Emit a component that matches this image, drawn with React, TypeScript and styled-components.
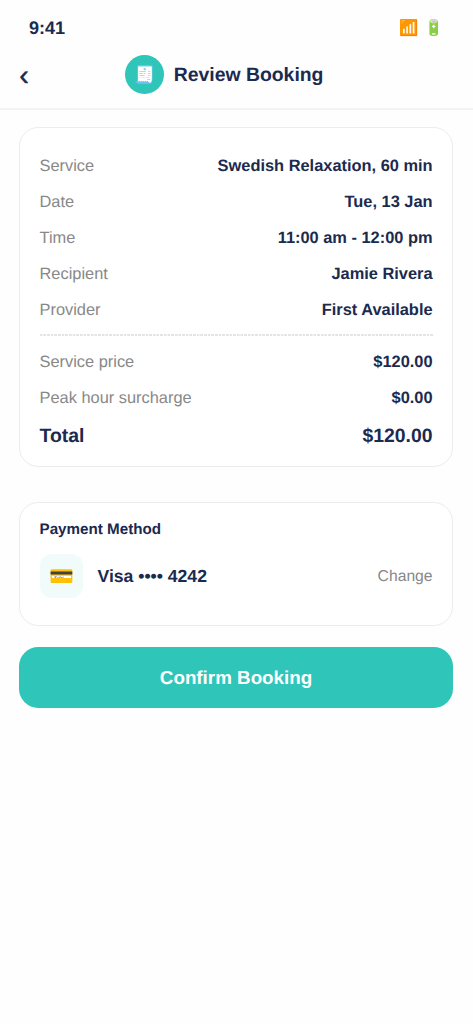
import React from "react";
import styled, { createGlobalStyle } from "styled-components";

const navy = "#1b2a4e";
const teal = "#2fc5b8";
const grey = "#888888";
const line = "#ececec";

const GlobalStyle = createGlobalStyle`
  * { box-sizing: border-box; }
  body {
    margin: 0;
    background: #fefefe;
    color: ${navy};
    font-family: "Liberation Sans", Arial, "Noto Color Emoji", sans-serif;
    text-rendering: geometricPrecision;
  }
`;

const Screen = styled.div`
  display: flex;
  flex-direction: column;
  width: 100%;
  min-height: 1024px;
`;

const StatusBar = styled.div`
  display: flex;
  align-items: center;
  justify-content: space-between;
  height: 55px;
  padding: 1px 28.9px 0;
  font-size: 18.1px;
  font-weight: 700;
`;

const StatusIcons = styled.div`
  display: flex;
  gap: 6.4px;
  font-size: 15.6px;
  font-weight: 400;
`;

const Header = styled.header`
  display: grid;
  grid-template-columns: 10px 1fr 34.4px;
  grid-template-rows: 39px;
  align-items: center;
  height: 54.8px;
  padding: 0 19.26px;
  border-bottom: 2px solid #f3f3f3;
`;

const BackButton = styled.button`
  padding: 2px 0 0;
  border: 0;
  background: none;
  color: ${navy};
  font: 400 28.9px/37px "Liberation Sans", Arial, sans-serif;
  -webkit-text-stroke: 0.4px ${navy};
  text-align: left;
`;

const HeaderTitle = styled.h1`
  display: flex;
  align-items: center;
  justify-content: center;
  gap: 9.6px;
  margin: 0;
  font-size: 19.4px;
  font-weight: 700;
  white-space: nowrap;
`;

const TitleText = styled.span`
  padding-top: 2px;
`;

const HeaderBadge = styled.span`
  display: flex;
  align-items: center;
  justify-content: center;
  width: 39px;
  height: 39px;
  padding-top: 1px;
  border-radius: 50%;
  background: ${teal};
  font-size: 16.85px;
  font-weight: 400;
`;

const Content = styled.main`
  display: flex;
  flex-direction: column;
  padding: 16.8px 20.2px 0 19.26px;
`;

const Card = styled.section<{ $height: number; $gap: number }>`
  height: ${(p) => p.$height}px;
  margin-bottom: ${(p) => p.$gap}px;
  padding: 19.26px;
  border: 1.2px solid ${line};
  border-radius: 19.26px;
  background: #fff;
`;

const Row = styled.div`
  display: flex;
  align-items: center;
  justify-content: space-between;
  height: 36px;
  padding-top: 2.6px;
  font-size: 16.4px;
`;

const Label = styled.span`
  color: ${grey};
`;

const Value = styled.span`
  font-weight: 700;
`;

const Divider = styled.hr`
  height: 2px;
  margin: 7px 0;
  border: 0;
  background: repeating-linear-gradient(
    90deg,
    #e4e4e4 0 2.2px,
    #fff 2.7px 3.2px,
    #e4e4e4 3.65px
  );
`;

const TotalRow = styled.div`
  display: flex;
  justify-content: space-between;
  padding-top: 10.4px;
  font-size: 19.4px;
  line-height: 22px;
  font-weight: 700;
`;

const CardTitle = styled.h2`
  margin: -2px 0 14.2px;
  font-size: 15.2px;
  line-height: 20px;
  font-weight: 700;
`;

const PaymentRow = styled.div`
  display: flex;
  align-items: center;
  gap: 14.4px;
`;

const PaymentIcon = styled.span`
  display: flex;
  align-items: center;
  justify-content: center;
  width: 43.6px;
  height: 43.6px;
  padding: 2px 0 0 1px;
  border-radius: 12px;
  background: #f0fbfa;
  font-size: 20px;
`;

const CardNumber = styled.span`
  flex: 1;
  padding-top: 2px;
  font-size: 17.6px;
  font-weight: 700;
`;

const ChangeLink = styled.a`
  padding-top: 2px;
  color: ${grey};
  font-size: 15.7px;
`;

const ConfirmButton = styled.button`
  height: 60.5px;
  border: 0;
  border-radius: 19.26px;
  background: ${teal};
  color: #fff;
  font: 700 18.8px "Liberation Sans", Arial, sans-serif;
  text-rendering: geometricPrecision;
`;

const details = [
  ["Service", "Swedish Relaxation, 60 min"],
  ["Date", "Tue, 13 Jan"],
  ["Time", "11:00 am - 12:00 pm"],
  ["Recipient", "Jamie Rivera"],
  ["Provider", "First Available"],
];

const prices = [
  ["Service price", "$120.00"],
  ["Peak hour surcharge", "$0.00"],
];

const Rows = ({ items }: { items: string[][] }) => (
  <>
    {items.map(([label, value]) => (
      <Row key={label}>
        <Label>{label}</Label>
        <Value>{value}</Value>
      </Row>
    ))}
  </>
);

export default function App() {
  return (
    <Screen>
      <GlobalStyle />
      <StatusBar>
        <span>9:41</span>
        <StatusIcons>
          <span>📶</span>
          <span>🔋</span>
        </StatusIcons>
      </StatusBar>
      <Header>
        <BackButton aria-label="Back">‹</BackButton>
        <HeaderTitle>
          <HeaderBadge>🧾</HeaderBadge>
          <TitleText>Review Booking</TitleText>
        </HeaderTitle>
      </Header>
      <Content>
        <Card $height={340.8} $gap={34.2}>
          <Rows items={details} />
          <Divider />
          <Rows items={prices} />
          <TotalRow>
            <span>Total</span>
            <span>$120.00</span>
          </TotalRow>
        </Card>
        <Card $height={124.1} $gap={21.7}>
          <CardTitle>Payment Method</CardTitle>
          <PaymentRow>
            <PaymentIcon>💳</PaymentIcon>
            <CardNumber>Visa •••• 4242</CardNumber>
            <ChangeLink>Change</ChangeLink>
          </PaymentRow>
        </Card>
        <ConfirmButton>Confirm Booking</ConfirmButton>
      </Content>
    </Screen>
  );
}
